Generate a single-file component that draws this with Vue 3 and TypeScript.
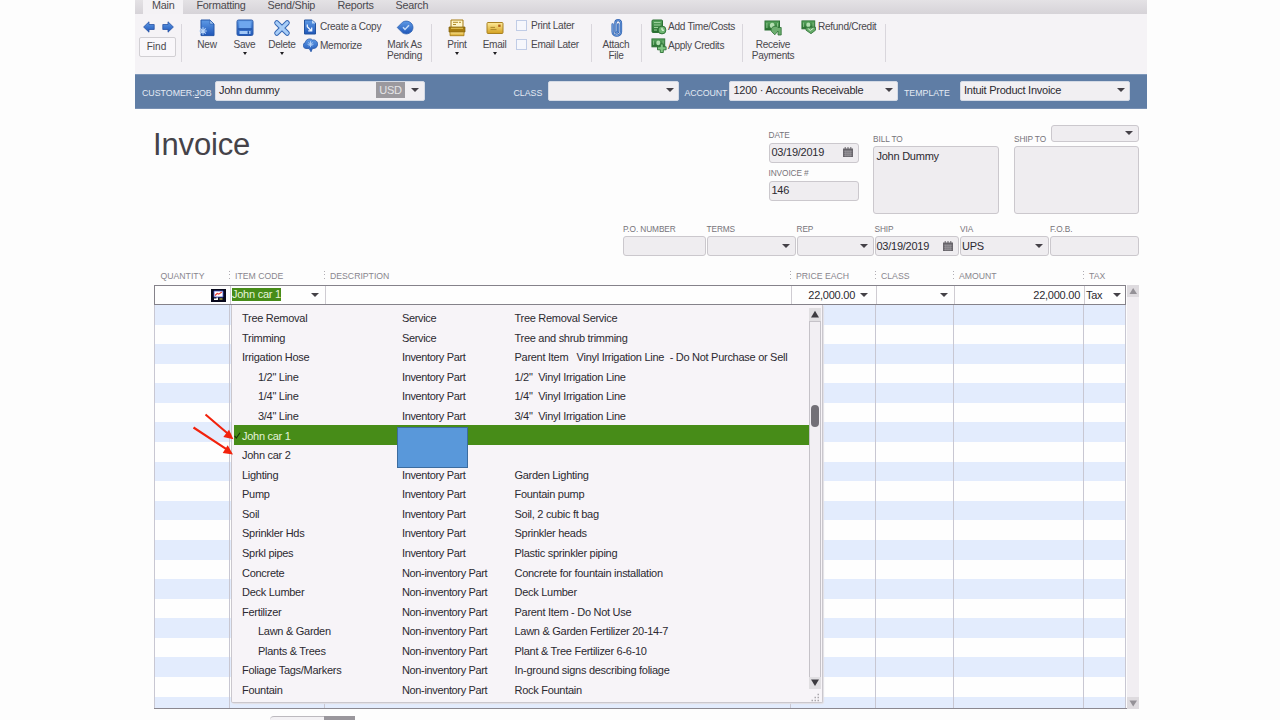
<script setup lang="ts">
interface Item {
  name: string
  type: string
  desc: string
  sub?: boolean
  active?: boolean
}

const tabs: { label: string; cls: string }[] = [
  { label: 'Main', cls: 'tab-main' },
  { label: 'Formatting', cls: 'tab-formatting' },
  { label: 'Send/Ship', cls: 'tab-send' },
  { label: 'Reports', cls: 'tab-reports' },
  { label: 'Search', cls: 'tab-search' },
]

const headers: string[] = ['QUANTITY', 'ITEM CODE', 'DESCRIPTION', 'PRICE EACH', 'CLASS', 'AMOUNT', 'TAX']

const inv = 'Inventory Part'
const non = 'Non-inventory Part'
const items: Item[] = [
  { name: 'Tree Removal', type: 'Service', desc: 'Tree Removal Service' },
  { name: 'Trimming', type: 'Service', desc: 'Tree and shrub trimming' },
  { name: 'Irrigation Hose', type: inv, desc: 'Parent Item   Vinyl Irrigation Line  - Do Not Purchase or Sell' },
  { name: '1/2" Line', type: inv, desc: '1/2"  Vinyl Irrigation Line', sub: true },
  { name: '1/4" Line', type: inv, desc: '1/4"  Vinyl Irrigation Line', sub: true },
  { name: '3/4" Line', type: inv, desc: '3/4"  Vinyl Irrigation Line', sub: true },
  { name: 'John car 1', type: '', desc: '', active: true },
  { name: 'John car 2', type: '', desc: '' },
  { name: 'Lighting', type: inv, desc: 'Garden Lighting' },
  { name: 'Pump', type: inv, desc: 'Fountain pump' },
  { name: 'Soil', type: inv, desc: 'Soil, 2 cubic ft bag' },
  { name: 'Sprinkler Hds', type: inv, desc: 'Sprinkler heads' },
  { name: 'Sprkl pipes', type: inv, desc: 'Plastic sprinkler piping' },
  { name: 'Concrete', type: non, desc: 'Concrete for fountain installation' },
  { name: 'Deck Lumber', type: non, desc: 'Deck Lumber' },
  { name: 'Fertilizer', type: non, desc: 'Parent Item - Do Not Use' },
  { name: 'Lawn & Garden', type: non, desc: 'Lawn & Garden Fertilizer 20-14-7', sub: true },
  { name: 'Plants & Trees', type: non, desc: 'Plant & Tree Fertilizer 6-6-10', sub: true },
  { name: 'Foliage Tags/Markers', type: non, desc: 'In-ground signs describing foliage' },
  { name: 'Fountain', type: non, desc: 'Rock Fountain' },
]
</script>

<template>
  <div class="page">
    <svg class="defs" width="0" height="0">
      <defs>
        <linearGradient id="blue" x1="0" y1="0" x2="0" y2="1">
          <stop offset="0" stop-color="#5f9be6" /><stop offset="1" stop-color="#1f56b8" />
        </linearGradient>
        <linearGradient id="green" x1="0" y1="0" x2="0" y2="1">
          <stop offset="0" stop-color="#5aa860" /><stop offset="1" stop-color="#246b2c" />
        </linearGradient>
        <linearGradient id="gold" x1="0" y1="0" x2="0" y2="1">
          <stop offset="0" stop-color="#ffeb9a" /><stop offset="1" stop-color="#d3a01f" />
        </linearGradient>
        <symbol id="cash" viewBox="0 0 18 15">
          <rect x="1" y="1" width="14.5" height="9" fill="url(#green)" stroke="#2d7135" />
          <ellipse cx="8.2" cy="5.5" rx="2.3" ry="2.8" fill="#b4dfb2" />
          <path d="M2.9 3v5M13.6 3v5" stroke="#8cc58c" />
        </symbol>
        <symbol id="cal" viewBox="0 0 10 10">
          <path d="M0 1.5h10V10H0z" fill="#67646a" />
          <path d="M2.2 0v2.5M7.8 0v2.5M5 0v2.5" stroke="#67646a" />
          <path d="M.8 4.2h8.4M.8 6.2h8.4M.8 8.2h8.4M2.9 3.5v6M5 3.5v6M7.1 3.5v6" stroke="#b3b0b5" stroke-width=".55" />
        </symbol>
      </defs>
    </svg>

    <main class="app">
      <nav class="tabs">
        <span v-for="t in tabs" :key="t.label" class="tab" :class="t.cls">{{ t.label }}</span>
      </nav>

      <section class="ribbon">
        <div class="find-group">
          <div class="find-arrows">
            <svg width="12" height="12" viewBox="0 0 12 12"><path d="M.6 6 6 .8v2.7h5.2v5H6v2.7z" fill="url(#blue)" stroke="#2853a5" stroke-width=".8" /></svg>
            <svg width="12" height="12" viewBox="0 0 12 12"><path d="M11.4 6 6 .8v2.7H.8v5H6v2.7z" fill="url(#blue)" stroke="#2853a5" stroke-width=".8" /></svg>
          </div>
          <button class="find">Find</button>
        </div>
        <i class="sep" />
        <div class="tool w-new">
          <svg width="18" height="18" viewBox="0 0 18 18">
            <path d="M3 1h8.8L16 5v11.6H3z" fill="url(#blue)" stroke="#2456a8" />
            <path d="M11.8 1v4H16z" fill="#a9cbf4" stroke="#2456a8" stroke-width=".6" />
            <path d="M5 8.2v7.6M1.2 12h7.6M2.3 9.3l5.4 5.4M7.7 9.3l-5.4 5.4" stroke="#b9d5f8" stroke-width="1.1" />
          </svg>
          <span>New</span>
        </div>
        <div class="tool w-save">
          <svg width="18" height="18" viewBox="0 0 18 18">
            <rect x="1" y="1" width="16" height="15.5" rx="1.5" fill="url(#blue)" stroke="#2d5aa8" />
            <path d="M3.2 2.2h11.6v7H3.2z" fill="#6fa7ee" />
            <path d="M2 10h14" stroke="#214f9e" stroke-width="1.2" />
            <path d="M3.5 12h11v3h-11z" fill="#a3c8f6" /><path d="M11.6 12.2h1.5v2.6h-1.5z" fill="#1d4fa3" />
          </svg>
          <span>Save</span><b class="caret" />
        </div>
        <div class="tool w-delete">
          <svg width="18" height="18" viewBox="0 0 18 18">
            <path d="m3.8 3.8 10.4 10.4M14.2 3.8 3.8 14.2" stroke="#3768b5" stroke-width="5.2" stroke-linecap="round" />
            <path d="m3.8 3.8 10.4 10.4M14.2 3.8 3.8 14.2" stroke="#a8cdf7" stroke-width="3.2" stroke-linecap="round" />
          </svg>
          <span>Delete</span><b class="caret" />
        </div>
        <div class="stack s-copy">
          <div class="line">
            <svg width="15" height="16" viewBox="0 0 15 16">
              <path d="M1.5 1H9l3.5 3v11h-11z" fill="url(#blue)" stroke="#23529e" />
              <path d="M9 1v3.5h3.5z" fill="#bed7f6" />
              <path d="M4.3 5.5v2.2l4 4M5.2 11.8h3.5V8.5" fill="none" stroke="#edf5ff" stroke-width="1.3" />
            </svg>
            <span>Create a Copy</span>
          </div>
          <div class="line">
            <svg width="15" height="16" viewBox="0 0 15 16">
              <path d="M4 11.5C-.5 12-1 6.5 2.2 5.8 2.5 2 7.6.8 9.5 3c3-.7 5.8 2.2 5 4.9-.2 2.7-3 4-5 3.5L8 14.8 6.2 11.6z" fill="url(#blue)" stroke="#2456a8" stroke-width=".8" />
              <path d="M7.5 4.2v6M4.5 7.2h6M5.5 5.2l4 4M9.5 5.2l-4 4" stroke="#b9d5f8" stroke-width=".9" />
            </svg>
            <span>Memorize</span>
          </div>
        </div>
        <div class="tool w-mark">
          <svg width="18" height="18" viewBox="0 0 18 18">
            <path d="M1.2 8.5 6.5 3.2C11 .3 17 3.5 17 8.5S11 16.8 6.5 13.8z" fill="url(#blue)" stroke="#3163b3" stroke-width=".8" />
            <path d="m7 8.3 2 2.2 4-4.2" fill="none" stroke="#c5ddfa" stroke-width="1.5" />
          </svg>
          <span>Mark As<br />Pending</span>
        </div>
        <i class="sep" />
        <div class="tool w-print">
          <svg width="18" height="18" viewBox="0 0 18 18">
            <path d="M3 1h12v9H3z" fill="#fff6c9" stroke="#a57a12" />
            <path d="M5 3.3h5M11 3.3h2M5 5.5h3" stroke="#b18b2a" />
            <path d="M1 8h16v5H1z" fill="#a77c10" stroke="#80600d" stroke-width=".7" />
            <path d="M2 13h14v3.7H2z" fill="url(#gold)" stroke="#a57a12" stroke-width=".8" />
            <path d="M3 9.3h12" stroke="#e8c659" />
          </svg>
          <span>Print</span><b class="caret" />
        </div>
        <div class="tool w-email">
          <svg width="18" height="18" viewBox="0 0 18 18">
            <rect x="1" y="3.5" width="16" height="11" rx="1" fill="url(#gold)" stroke="#a98122" />
            <path d="M12.2 5.6h2.4v2.3h-2.4z" fill="#b15f17" />
            <path d="M4.5 8.4h4.5M4.5 10.6h6" stroke="#9e7922" stroke-width=".8" />
          </svg>
          <span>Email</span><b class="caret" />
        </div>
        <div class="stack s-check">
          <div class="line"><i class="box" /><span>Print Later</span></div>
          <div class="line"><i class="box" /><span>Email Later</span></div>
        </div>
        <i class="sep" />
        <div class="tool w-attach">
          <svg width="18" height="18" viewBox="0 0 18 18">
            <path d="M5.6 5.5v7.3c0 5 8.4 5 8.4 0V4.2c0-4-5.6-4-5.6 0v8c0 2 2.8 2 2.8 0V5.5" fill="none" stroke="#3163b1" stroke-width="2.3" stroke-linecap="round" />
            <path d="M5.6 5.5v7.3c0 5 8.4 5 8.4 0V4.2c0-4-5.6-4-5.6 0v8c0 2 2.8 2 2.8 0V5.5" fill="none" stroke="#79a8e6" stroke-width=".8" stroke-linecap="round" />
          </svg>
          <span>Attach<br />File</span>
        </div>
        <i class="sep" />
        <div class="stack s-time">
          <div class="line">
            <svg width="16" height="16" viewBox="0 0 16 16">
              <rect x="1" y="1" width="10.5" height="12.5" rx="1" fill="url(#green)" stroke="#2d7135" />
              <path d="M3 3.5h6.5M3 6h6.5M3 8.5h4M3 11h3" stroke="#9ccf9b" />
              <circle cx="11" cy="11" r="3.9" fill="#70b673" stroke="#2d7135" />
              <path d="M11 8.8v2.4h2" fill="none" stroke="#f1fff0" />
            </svg>
            <span>Add Time/Costs</span>
          </div>
          <div class="line">
            <svg width="16" height="16" viewBox="0 0 16 16">
              <use href="#cash" x="0" y="1" width="16" height="13.3" />
              <path d="M9.3 7h3v2.8h2.8v3h-2.8v2.7h-3v-2.7H6.5v-3h2.8z" fill="#82c783" stroke="#2d7135" stroke-width=".9" />
            </svg>
            <span>Apply Credits</span>
          </div>
        </div>
        <i class="sep" />
        <div class="tool w-receive">
          <svg width="18" height="18" viewBox="0 0 18 18">
            <use href="#cash" x="0" y="1" width="18" height="15" />
            <path d="M7 11c0-4 6-4.6 7-2.5h3.2V16H14v-4l-3.2 3.8L7.5 12.5z" fill="#6dae70" stroke="#2d7135" stroke-width=".8" />
          </svg>
          <span>Receive<br />Payments</span>
        </div>
        <div class="stack s-refund">
          <div class="line">
            <svg width="16" height="16" viewBox="0 0 16 16">
              <use href="#cash" x="0" y="1" width="16" height="13.3" />
              <path d="M5 8.2h9.5v3L10 14.7 5 11.2z" fill="#65aa68" stroke="#2d7135" stroke-width=".8" />
              <path d="m7.3 9.8 2 1.7 3.2-2.3" fill="none" stroke="#d9f1d8" />
            </svg>
            <span>Refund/Credit</span>
          </div>
        </div>
        <i class="sep" />
      </section>

      <section class="band">
        <label class="l-customer">CUSTOMER:<u>J</u>OB</label>
        <div class="combo c-customer"><span>John dummy</span><em>USD</em><b class="arrow" /></div>
        <label class="l-class">CLASS</label>
        <div class="combo c-class"><span /><b class="arrow" /></div>
        <label class="l-account">ACCOUNT</label>
        <div class="combo c-account"><span>1200 · Accounts Receivable</span><b class="arrow" /></div>
        <label class="l-template">TEMPLATE</label>
        <div class="combo c-template"><span>Intuit Product Invoice</span><b class="arrow" /></div>
      </section>

      <section class="form">
        <h1>Invoice</h1>
        <div class="dates">
          <label>DATE</label>
          <div class="field"><span>03/19/2019</span><svg class="cal" width="10" height="10"><use href="#cal" /></svg></div>
          <label class="second">INVOICE #</label>
          <div class="field"><span>146</span></div>
        </div>
        <div class="bill">
          <label>BILL TO</label>
          <div class="area">John Dummy</div>
        </div>
        <div class="ship">
          <div class="ship-head"><label>SHIP TO</label><div class="field"><span /><b class="arrow" /></div></div>
          <div class="area" />
        </div>
      </section>

      <section class="details">
        <div class="d-po"><label>P.O. NUMBER</label><div class="field"><span /></div></div>
        <div class="d-terms"><label>TERMS</label><div class="field"><span /><b class="arrow" /></div></div>
        <div class="d-rep"><label>REP</label><div class="field"><span /><b class="arrow" /></div></div>
        <div class="d-ship"><label>SHIP</label><div class="field"><span>03/19/2019</span><svg class="cal" width="10" height="10"><use href="#cal" /></svg></div></div>
        <div class="d-via"><label>VIA</label><div class="field"><span>UPS</span><b class="arrow" /></div></div>
        <div class="d-fob"><label>F.O.B.</label><div class="field"><span /></div></div>
      </section>

      <section class="table">
        <div class="cols head"><span v-for="h in headers" :key="h">{{ h }}</span></div>
        <div class="body">
          <div class="grid">
            <div class="cols entry">
              <div class="qty">
                <svg width="15" height="13" viewBox="0 0 15 13">
                  <path d="M0 0h15v13H0z" fill="#08081c" />
                  <path d="M3 2h9v6H3z" fill="#fff" stroke="#3f4fc8" stroke-width=".8" />
                  <path d="m4 6.5 2.2-2 1.6.6L10.8 3" fill="none" stroke="#ec3d36" stroke-width="1.1" />
                  <path d="M3 10.2h3.2V8.6" fill="none" stroke="#fff" stroke-width="1.5" />
                  <path d="M8.5 10h3" stroke="#d5cb4a" stroke-width="1.2" />
                </svg>
              </div>
              <div><mark>John car 1</mark><b class="arrow" /></div>
              <div />
              <div class="num price"><span>22,000.00</span><b class="arrow" /></div>
              <div><b class="arrow" /></div>
              <div class="num amount"><span>22,000.00</span></div>
              <div class="tax"><span>Tax</span><b class="arrow" /></div>
            </div>
            <div class="cols stripes"><i v-for="h in headers" :key="h" /></div>
          </div>
          <div class="scroll">
            <svg width="12" height="12" viewBox="0 0 12 12"><path d="M2.5 9h7.5L6.2 3z" fill="#949197" /></svg>
            <svg width="12" height="12" viewBox="0 0 12 12"><path d="M2.5 3.5h7.5l-3.8 6z" fill="#949197" /></svg>
          </div>
        </div>

        <div class="menu">
          <div class="list">
            <div v-for="it in items" :key="it.name" class="item" :class="{ sub: it.sub, active: it.active }">
              <svg class="check" width="7" height="7" viewBox="0 0 7 7"><path v-if="it.active" d="M.6 3.8 2.3 6 6 .8" fill="none" stroke="#16320a" stroke-width="1.1" /></svg>
              <span class="name">{{ it.name }}</span>
              <span class="type">{{ it.type }}</span>
              <span class="desc">{{ it.desc }}</span>
            </div>
          </div>
          <div class="menu-scroll">
            <svg class="btn" width="12" height="13" viewBox="0 0 12 13"><path d="M2 9.5h8L6 2.7z" fill="#3d3b40" /></svg>
            <div class="track"><i class="thumb" /></div>
            <svg class="btn" width="12" height="12" viewBox="0 0 12 12"><path d="M2 2.5h8L6 9z" fill="#3d3b40" /></svg>
            <svg class="grip" width="12" height="14" viewBox="0 0 12 14"><path d="M8.5 5.5h1.5M5.5 8.5H7M8.5 8.5H10M2.5 11.5H4M5.5 11.5H7M8.5 11.5H10" stroke="#aaa7ac" stroke-width="1.5" /></svg>
          </div>
        </div>
      </section>

      <footer class="foot"><i class="tab-light" /><i class="tab-dark" /></footer>
    </main>

    <div class="cover" />
    <svg class="pointers" width="50" height="50" viewBox="0 0 50 50">
      <path d="M15.5 4.5 38 23.7M3.5 17.5 36 38.8" stroke="#f2220c" stroke-width="2.1" />
      <path d="m43.5 29.3-10.2-2.2 5.7-7.3zM43 44.5l-10.3-1.4 5-7.9z" fill="#f2220c" />
    </svg>
  </div>
</template>

<style>
body {
  overflow: hidden;
  background: #fdfdfd;
}
</style>

<style scoped>
* {
  box-sizing: border-box;
}
.page {
  position: relative;
  width: 1280px;
  height: 720px;
  overflow: hidden;
  background: #fdfdfd;
  font-family: 'Liberation Sans', Arial, sans-serif;
  font-size: 11px;
  letter-spacing: -0.25px;
  color: #2c2a31;
}
.defs {
  position: absolute;
}
svg,
i,
b {
  display: block;
  flex: none;
}
.app {
  width: 1012px;
  margin-left: 135px;
}
.tabs {
  display: flex;
  height: 14px;
  background: linear-gradient(#e4e2e5, #d6d3d8);
  font-size: 10.8px;
  line-height: 11px;
  color: #4b494e;
  white-space: nowrap;
}
.tab {
  height: 14px;
}
.tab-main {
  width: 40px;
  margin-left: 8px;
  padding-left: 9px;
  background: #f4f2f5;
}
.tab-formatting {
  width: 71px;
  margin-left: 13.5px;
}
.tab-send {
  width: 70px;
}
.tab-reports {
  width: 58px;
}
.ribbon {
  display: flex;
  height: 60px;
  background: #f5f3f6;
  font-size: 10.1px;
  letter-spacing: -0.3px;
  color: #4a484d;
  white-space: nowrap;
}
.find-group {
  width: 46px;
  padding: 7px 0 0 4px;
}
.find-arrows {
  display: flex;
  gap: 7px;
  padding-left: 4px;
}
.find {
  display: block;
  width: 37px;
  height: 20px;
  margin-top: 3.5px;
  padding: 0 2px 1px 0;
  border: 1px solid #d1cfd3;
  border-radius: 2px;
  background: #f9f7fa;
  font: inherit;
  letter-spacing: 0;
  color: inherit;
}
.sep {
  width: 1px;
  height: 38px;
  margin-top: 10px;
  background: #d9d6dc;
}
.tool {
  display: flex;
  flex-direction: column;
  align-items: center;
  padding-top: 5px;
  text-align: center;
  line-height: 11px;
}
.tool > span {
  margin-top: 2px;
}
.caret {
  margin-top: 2px;
  border: 2.5px solid transparent;
  border-top: 3px solid #1e1c20;
  border-bottom: 0;
}
.w-new {
  width: 38px;
  margin-left: 6px;
}
.w-save {
  width: 37px;
}
.w-delete {
  width: 38px;
}
.w-mark {
  width: 45px;
  margin-right: 4px;
}
.w-print {
  width: 38px;
  margin-left: 6px;
}
.w-email {
  width: 37px;
}
.w-attach {
  width: 38px;
  margin: 0 6px 0 5px;
}
.w-receive {
  width: 50px;
  margin-left: 5px;
}
.stack {
  padding-top: 3.5px;
}
.line {
  display: flex;
  align-items: center;
  gap: 2px;
  height: 18.5px;
}
.s-copy {
  width: 79px;
  margin-left: 2px;
}
.s-check {
  width: 75px;
  margin-left: 3px;
  padding-top: 2px;
}
.s-check .line {
  gap: 4px;
  height: 19px;
}
.box {
  width: 11px;
  height: 11px;
  border: 1px solid #c0cce6;
  background: #f6f7fc;
}
.s-time {
  width: 91px;
  margin-left: 9px;
}
.s-time .line,
.s-refund .line {
  gap: 1px;
}
.s-refund {
  width: 80px;
  margin: 0 4px 0 3px;
}
.band {
  display: flex;
  align-items: center;
  height: 35px;
  padding-left: 7px;
  border-top: 1px solid #7d97b9;
  border-bottom: 1px solid #7890b3;
  background: #5f7da5;
  white-space: nowrap;
}
.band label {
  padding-top: 3px;
  font-size: 8.8px;
  letter-spacing: 0;
  color: #e4eaf3;
}
.band .combo {
  display: flex;
  align-items: center;
  height: 20px;
  margin-bottom: 2px;
  padding: 0 4px 1px 4px;
  border: 1px solid #d4dae5;
  border-radius: 2px;
  background: #f1eff2;
}
.combo > span {
  flex: 1;
}
.combo em {
  width: 29px;
  height: 16px;
  margin-right: 6px;
  background: #9b999e;
  color: #e6e5e7;
  font-style: normal;
  line-height: 16px;
  text-align: center;
}
.arrow {
  border: 4px solid transparent;
  border-top: 4px solid #444147;
  border-bottom: 0;
}
.l-customer {
  width: 73px;
}
.c-customer {
  width: 210px;
}
.band .c-customer {
  padding: 0 5px 1px 3px;
}
.l-class {
  width: 34px;
  margin-left: 88.5px;
}
.c-class {
  width: 131px;
}
.l-account {
  width: 44px;
  margin-left: 6px;
}
.band .l-account {
  letter-spacing: -0.1px;
}
.c-account {
  width: 169px;
}
.l-template {
  width: 56px;
  margin-left: 6.5px;
}
.c-template {
  width: 170px;
}
.band .c-template {
  padding-left: 3px;
}
h1 {
  width: 615.5px;
  margin: 18px 0 0;
  font-size: 31px;
  font-weight: 400;
  letter-spacing: -0.15px;
  line-height: 35px;
  color: #454349;
}
.form {
  display: flex;
  height: 115px;
  padding-left: 18px;
}
.form label,
.details label {
  display: block;
  height: 10px;
  font-size: 8.3px;
  letter-spacing: -0.1px;
  line-height: 11px;
  color: #77747a;
  white-space: nowrap;
}
.field {
  display: flex;
  align-items: center;
  height: 20px;
  padding: 0 5px 1px 2px;
  border: 1px solid #cbc8cd;
  border-radius: 3px;
  background: #efedf0;
  white-space: nowrap;
}
.field > span {
  flex: 1;
}
.dates {
  width: 90px;
  padding-top: 21px;
}
.dates .field {
  margin-top: 2.5px;
}
.dates label.second {
  margin-top: 5.5px;
}
.bill {
  width: 126px;
  margin-left: 14.5px;
  padding-top: 25px;
}
.area {
  height: 68px;
  margin-top: 2px;
  padding: 3px 2.5px;
  border: 1px solid #cbc8cd;
  border-radius: 3px;
  background: #efedf0;
  line-height: 12px;
}
.ship {
  width: 125px;
  margin-left: 15px;
  padding-top: 15.5px;
}
.ship-head {
  display: flex;
  justify-content: space-between;
  align-items: flex-end;
}
.ship-head label {
  margin-bottom: -2px;
}
.ship-head .field {
  width: 88px;
  height: 17px;
}
.ship .area {
  margin-top: 4.5px;
}
.details {
  display: flex;
  gap: 1px;
  height: 47px;
  padding-left: 488px;
}
.details .field {
  margin-top: 2px;
}
.d-po {
  width: 82.5px;
}
.d-terms {
  width: 89px;
}
.d-rep {
  width: 77px;
}
.d-ship {
  width: 84.5px;
}
.d-ship .field {
  padding-left: 1px;
}
.d-via {
  width: 89px;
}
.d-via .field {
  padding-left: 1px;
}
.d-fob {
  width: 89px;
}
.table {
  position: relative;
  margin-left: 19px;
}
.cols {
  display: grid;
  grid-template-columns: 76px 95px 466px 85px 78px 130px 42px;
  width: 972px;
}
.head {
  height: 14px;
}
.head span {
  height: 10px;
  margin-left: -1px;
  padding-left: 6px;
  background: repeating-linear-gradient(#b0adb3 0 1px, transparent 1px 3.5px) 0 0 / 1px 9px no-repeat;
  font-size: 8.7px;
  letter-spacing: 0;
  line-height: 10px;
  color: #89868d;
}
.head span:first-child {
  margin-left: 0;
  padding-left: 6.5px;
  background: none;
}
.body {
  display: flex;
  height: 424px;
}
.grid {
  width: 973px;
  border-bottom: 1px solid #8b8890;
}
.entry {
  height: 20px;
  border: 1px solid #85828a;
  background: #fefefe;
}
.entry > div {
  display: flex;
  align-items: center;
  justify-content: flex-end;
  padding-right: 6px;
  padding-bottom: 1px;
  border-right: 1px solid #cfccd2;
}
.entry .qty {
  padding: 0 4px 0 0;
}
.entry mark {
  margin-right: auto;
  margin-left: 1px;
  background: #478c18;
  color: #e5f3da;
  line-height: 13px;
}
.entry .num {
  gap: 5px;
}
.entry .price {
  padding-right: 8px;
}
.entry .amount {
  padding-right: 4px;
}
.entry .tax {
  justify-content: space-between;
  padding-left: 1px;
  border-right: 0;
}
.stripes {
  height: 403px;
  background: repeating-linear-gradient(#e3ecfd 0 19.58px, #fefefe 19.58px 39.16px);
}
.stripes i {
  border-right: 1px solid #c8c7d2;
}
.stripes i:first-child {
  border-left: 1px solid #c8c7d2;
}
.scroll {
  display: flex;
  flex-direction: column;
  justify-content: space-between;
  width: 12px;
  background: #f1eef2;
}
.scroll svg {
  background: #dedbdf;
}
.menu {
  position: absolute;
  top: 34px;
  left: 77px;
  display: flex;
  width: 592px;
  height: 398px;
  padding-top: 3px;
  border: 1px solid #cac7cd;
  border-top: 0;
  border-radius: 0 0 2px 2px;
  background: #f7f4f8;
  box-shadow: 1px 1px 1px #e2e0e5;
}
.list {
  width: 577px;
}
.item {
  display: grid;
  grid-template-columns: 8px 160px 112.5px 1fr;
  align-items: center;
  height: 19.58px;
  margin-left: 2px;
  padding-top: 0.5px;
  font-size: 11px;
  letter-spacing: -0.28px;
  white-space: pre;
}
.item .type {
  letter-spacing: -0.36px;
}
.item.sub .name {
  padding-left: 16px;
}
.item.active {
  background: #478c18;
  color: #e5f3da;
}
.menu-scroll {
  width: 12px;
}
.btn {
  background: #e1dfe2;
}
.track {
  height: 356px;
  padding-top: 83px;
  border: solid #c5c2c8;
  border-width: 1px 1px 0;
  background: #f2eff3;
}
.thumb {
  width: 8px;
  height: 22px;
  margin: 0 auto;
  border-radius: 4px;
  background: #737077;
}
.foot {
  display: flex;
  height: 11px;
  padding: 7px 0 0 135px;
}
.tab-light {
  width: 54px;
  border-top: 1px solid #bcb9be;
  border-radius: 4px 0 0;
  background: #f3f1f4;
}
.tab-dark {
  width: 31px;
  background: #99969c;
}
.cover {
  position: absolute;
  top: 427px;
  left: 397px;
  width: 71px;
  height: 41px;
  border: 1px solid #3c6c9f;
  background: #5998da;
}
.pointers {
  position: absolute;
  top: 410px;
  left: 190px;
}
</style>
